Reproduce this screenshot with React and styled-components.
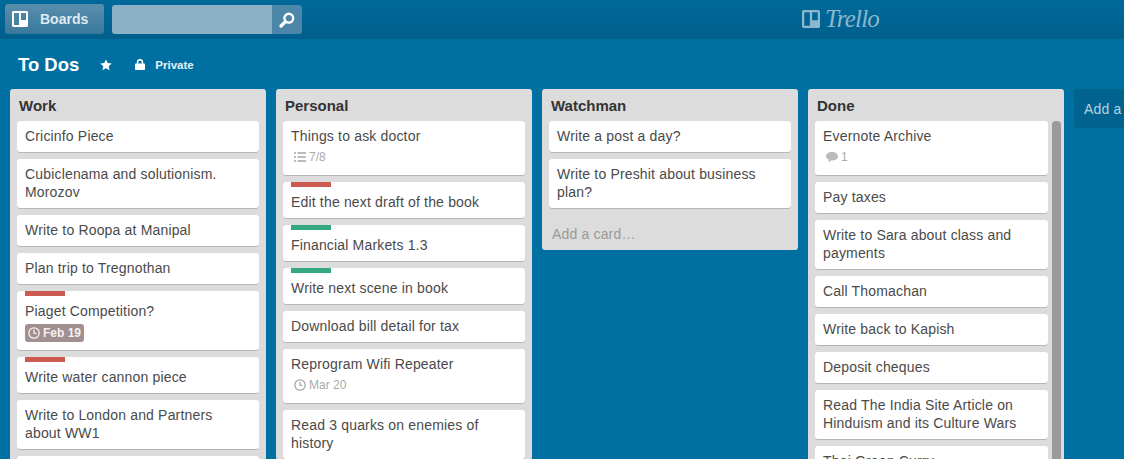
import React from 'react';
import styled, { createGlobalStyle } from 'styled-components';

const GlobalStyle = createGlobalStyle`
  html, body {
    margin: 0;
    height: 100%;
    overflow: hidden;
    background: #0070a2;
  }
`;

const Page = styled.div`
  width: 1124px;
  height: 459px;
  overflow: hidden;
  background: #0070a2;
  font-family: "Liberation Sans", Arial, sans-serif;
  color: #4a4a4a;
`;

const Header = styled.header`
  position: relative;
  display: flex;
  align-items: center;
  height: 39px;
  padding: 0 5px;
  box-sizing: border-box;
  background: linear-gradient(#006a9b, #005f8c);
`;

const BoardsButton = styled.div`
  display: flex;
  align-items: center;
  width: 99px;
  height: 30px;
  padding-left: 7px;
  box-sizing: border-box;
  margin-top: -1px;
  border-radius: 3px;
  background: linear-gradient(#5b8ead, #38789c);
  color: #dfeaf1;
  font-size: 14px;
  font-weight: bold;
  gap: 12px;
`;

const Search = styled.div`
  display: flex;
  margin-left: 8px;
  height: 29px;
`;

const SearchInput = styled.div`
  width: 160px;
  background: #8cb0c6;
  border-radius: 3px 0 0 3px;
`;

const SearchButton = styled.div`
  display: flex;
  align-items: center;
  justify-content: center;
  width: 30px;
  background: #4c86a8;
  border-radius: 0 3px 3px 0;
`;

const Logo = styled.div`
  position: absolute;
  left: 802px;
  top: 5px;
  display: flex;
  align-items: center;
  gap: 5px;
  color: #8db7ce;
  font-family: "Liberation Serif", serif;
  font-style: italic;
  font-size: 25px;
  letter-spacing: -0.8px;
  line-height: 28px;
`;

const BoardBar = styled.div`
  display: flex;
  align-items: center;
  height: 50px;
  padding: 1px 0 0 18px;
  box-sizing: border-box;
  color: #fff;
`;

const BoardTitle = styled.h1`
  margin: 0 21px 0 0;
  font-size: 18.500px;
  font-weight: bold;
  line-height: 50px;
`;

const Privacy = styled.span`
  display: flex;
  align-items: center;
  gap: 10px;
  margin-left: 23px;
  font-size: 11.500px;
  font-weight: bold;
  color: #e6f0f5;
`;

const Lists = styled.div`
  display: flex;
  align-items: flex-start;
  gap: 10px;
  padding-left: 10px;
`;

const List = styled.section`
  flex: 0 0 256px;
  box-sizing: border-box;
  padding: 0 ${p => (p.$scroll ? '3px' : '7px')} 0 7px;
  border-radius: 3px;
  background: #dcdcdc;
`;

const ListTitle = styled.h2`
  margin: 0;
  height: 32px;
  padding-left: 2px;
  font-size: 15px;
  font-weight: bold;
  line-height: 33px;
  color: #333;
`;

const ListBody = styled.div`
  display: flex;
  gap: 4px;
`;

const Cards = styled.div`
  flex: 1;
  min-width: 0;
  display: flex;
  flex-direction: column;
  gap: 6px;
`;

const Card = styled.article`
  position: relative;
  padding: ${p => (p.$label ? '11px' : '6px')} 8px 8px;
  border-radius: 3px;
  background: #fff;
  box-shadow: inset 0 -1px 0 #b5b5b5;
  font-size: 14px;
  letter-spacing: 0.17px;
  line-height: 18px;
`;

const Label = styled.span`
  position: absolute;
  top: 0;
  left: 8px;
  width: 40px;
  height: 5px;
  background: ${p => p.$color};
`;

const Badges = styled.div`
  display: flex;
  align-items: flex-start;
  height: 19px;
  margin-top: ${p => (p.$due ? '4px' : '3px')};
  padding-bottom: ${p => (p.$due ? '0' : '1px')};
`;

const Badge = styled.span`
  display: inline-flex;
  align-items: center;
  gap: 3px;
  height: 18px;
  padding: 0 3px;
  border-radius: 3px;
  font-size: 12px;
  letter-spacing: 0;
  color: ${p => (p.$due ? '#f6f0f0' : '#aaa')};
  font-weight: ${p => (p.$due ? 'bold' : 'normal')};
  background: ${p => (p.$due ? '#a28f8f' : 'transparent')};
`;

const Scrollbar = styled.div`
  flex: 0 0 9px;
  align-self: stretch;
  border-radius: 4px 4px 0 0;
  background: #9a9a9a;
`;

const AddCard = styled.div`
  height: 41px;
  padding: 0 3px;
  font-size: 14px;
  letter-spacing: 0.17px;
  line-height: 50px;
  color: #999;
`;

const AddList = styled.div`
  flex: 0 0 120px;
  height: 39px;
  padding-left: 10px;
  border-radius: 3px;
  background: #00628e;
  font-size: 14px;
  letter-spacing: 0.17px;
  line-height: 40px;
  color: #b5d2e1;
`;

const BoardsIcon = ({ size = 16, color = '#fff' }) => (
  <svg width={size} height={size} viewBox="0 0 16 16">
    <path fill={color} fillRule="evenodd" d="M0 1.5C0 .7.7 0 1.5 0h13c.8 0 1.5.7 1.5 1.5v13c0 .8-.7 1.5-1.5 1.5h-13C.7 16 0 15.3 0 14.5zM2 2v12h5V2zm7 0v7h5V2z" />
  </svg>
);

const SearchIcon = () => (
  <svg width="16" height="16" viewBox="0 0 16 16">
    <circle cx="9.8" cy="6.2" r="4.4" fill="none" stroke="#fff" strokeWidth="2.4" />
    <path d="M6.4 9.6 2 14" stroke="#fff" strokeWidth="3.2" strokeLinecap="round" />
  </svg>
);

const StarIcon = () => (
  <svg width="12" height="12" viewBox="0 0 12 12">
    <path fill="#fff" d="M6 .4l1.7 3.7 4 .4-3 2.7.9 4L6 9.2l-3.6 2 .9-4-3-2.7 4-.4z" />
  </svg>
);

const LockIcon = () => (
  <svg width="10" height="11" viewBox="0 0 10 11">
    <path fill="#fff" d="M1.8 4.5V3.2a3.2 3.2 0 0 1 6.4 0v1.3h.8c.5 0 1 .4 1 1V10c0 .6-.5 1-1 1H1c-.5 0-1-.4-1-1V5.500c0-.6.500-1 1-1zm1.500 0h3.400V3.200a1.700 1.700 0 0 0-3.400 0z" />
  </svg>
);

const ClockIcon = ({ color }) => (
  <svg width="12" height="12" viewBox="0 0 12 12" fill="none" stroke={color} strokeWidth="1.3">
    <circle cx="6" cy="6" r="5.200" />
    <path d="M6 2.800V6.300H8.600" />
  </svg>
);

const ChecklistIcon = () => (
  <svg width="12" height="12" viewBox="0 0 12 12" fill="#bbb">
    <path d="M0 1h2v2H0zM0 5h2v2H0zM0 9h2v2H0zM3.500 1H12v2H3.500zM3.500 5H12v2H3.500zM3.500 9H12v2H3.500z" />
  </svg>
);

const CommentIcon = () => (
  <svg width="12" height="12" viewBox="0 0 12 12" fill="#bbb">
    <path d="M6 1c3.300 0 6 1.800 6 4.200S9.300 9.400 6 9.400H5L2.500 11.500l.3-2.800C1.100 8 0 6.700 0 5.200 0 2.800 2.700 1 6 1z" />
  </svg>
);

const RED = '#cd5a52';
const GREEN = '#34a97f';

const BADGE_ICONS = {
  due: <ClockIcon color="#f6f0f0" />,
  date: <ClockIcon color="#aaa" />,
  list: <ChecklistIcon />,
  comment: <CommentIcon />,
};

const lists = [
  {
    title: 'Work',
    cards: [
      { text: 'Cricinfo Piece' },
      { text: 'Cubiclenama and solutionism. Morozov' },
      { text: 'Write to Roopa at Manipal' },
      { text: 'Plan trip to Tregnothan' },
      { text: 'Piaget Competition?', label: RED, badge: { type: 'due', text: 'Feb 19' } },
      { text: 'Write water cannon piece', label: RED },
      { text: 'Write to London and Partners about WW1' },
      { text: '\u00a0' },
    ],
  },
  {
    title: 'Personal',
    cards: [
      { text: 'Things to ask doctor', badge: { type: 'list', text: '7/8' } },
      { text: 'Edit the next draft of the book', label: RED },
      { text: 'Financial Markets 1.3', label: GREEN },
      { text: 'Write next scene in book', label: GREEN },
      { text: 'Download bill detail for tax' },
      { text: 'Reprogram Wifi Repeater', badge: { type: 'date', text: 'Mar 20' } },
      { text: 'Read 3 quarks on enemies of history' },
    ],
  },
  {
    title: 'Watchman',
    addCard: true,
    cards: [
      { text: 'Write a post a day?' },
      { text: 'Write to Preshit about business plan?' },
    ],
  },
  {
    title: 'Done',
    scroll: true,
    cards: [
      { text: 'Evernote Archive', badge: { type: 'comment', text: '1' } },
      { text: 'Pay taxes' },
      { text: 'Write to Sara about class and payments' },
      { text: 'Call Thomachan' },
      { text: 'Write back to Kapish' },
      { text: 'Deposit cheques' },
      { text: 'Read The India Site Article on Hinduism and its Culture Wars' },
      { text: 'Thai Green Curry' },
    ],
  },
];

const App = () => (
  <Page>
    <GlobalStyle />
    <Header>
      <BoardsButton>
        <BoardsIcon />
        Boards
      </BoardsButton>
      <Search>
        <SearchInput />
        <SearchButton>
          <SearchIcon />
        </SearchButton>
      </Search>
      <Logo>
        <BoardsIcon size={18} color="#8db7ce" />
        Trello
      </Logo>
    </Header>

    <BoardBar>
      <BoardTitle>To Dos</BoardTitle>
      <StarIcon />
      <Privacy>
        <LockIcon />
        Private
      </Privacy>
    </BoardBar>

    <Lists>
      {lists.map(list => (
        <List key={list.title} $scroll={list.scroll}>
          <ListTitle>{list.title}</ListTitle>
          <ListBody>
            <Cards>
              {list.cards.map((card, i) => (
                <Card key={i} $label={card.label}>
                  {card.label && <Label $color={card.label} />}
                  {card.text}
                  {card.badge && (
                    <Badges $due={card.badge.type === 'due'}>
                      <Badge $due={card.badge.type === 'due'}>
                        {BADGE_ICONS[card.badge.type]}
                        {card.badge.text}
                      </Badge>
                    </Badges>
                  )}
                </Card>
              ))}
            </Cards>
            {list.scroll && <Scrollbar />}
          </ListBody>
          {list.addCard && <AddCard>Add a card…</AddCard>}
        </List>
      ))}
      <AddList>Add a list…</AddList>
    </Lists>
  </Page>
);

export default App;
